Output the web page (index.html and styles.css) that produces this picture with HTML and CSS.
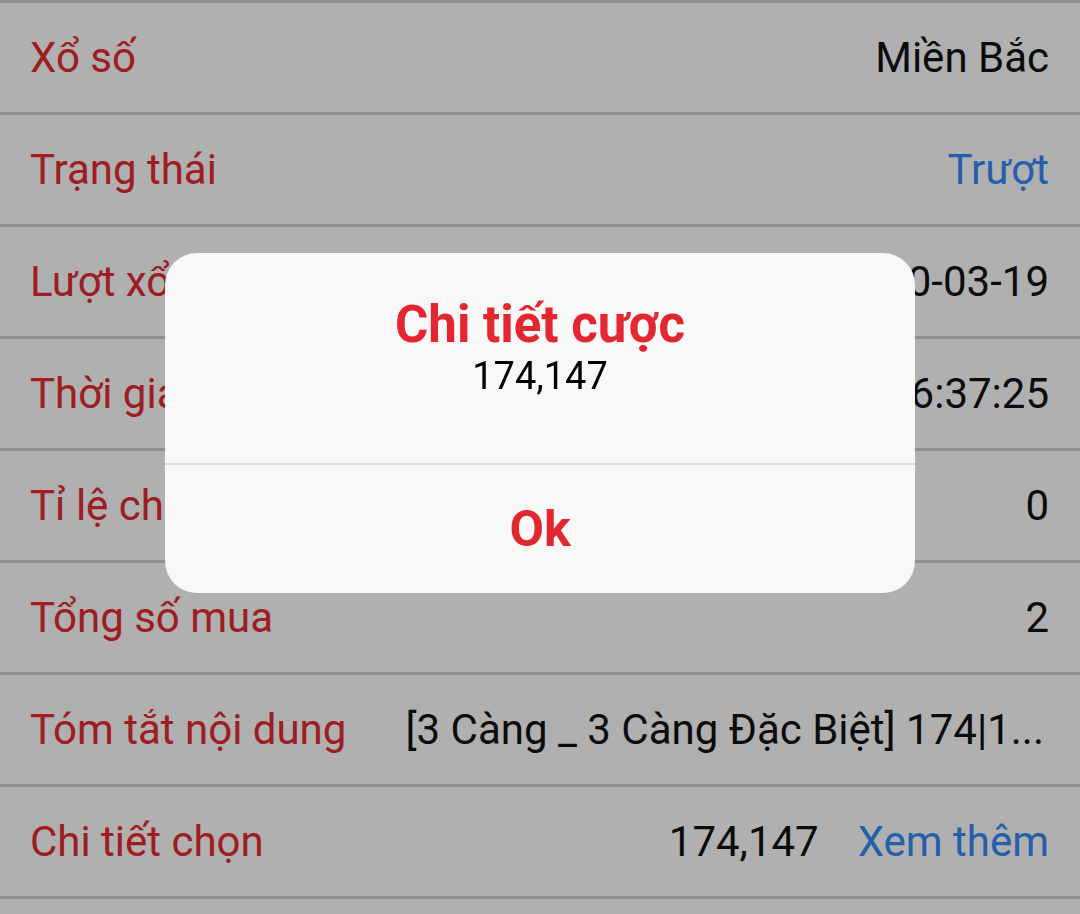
FILE: index.html
```html
<!DOCTYPE html>
<html lang="vi">

<head>
    <meta charset="UTF-8">
    <title>Chi tiết cược</title>
    <link rel="stylesheet" href="styles.css">
</head>

<body>
    <div class="detail-list">
        <div class="detail-row">
            <span class="detail-label">Xổ số</span>
            <span class="detail-value">Miền Bắc</span>
        </div>
        <div class="detail-row">
            <span class="detail-label">Trạng thái</span>
            <span class="detail-value link">Trượt</span>
        </div>
        <div class="detail-row">
            <span class="detail-label">Lượt xổ</span>
            <span class="detail-value">2020-03-19</span>
        </div>
        <div class="detail-row">
            <span class="detail-label">Thời gian</span>
            <span class="detail-value">2020-03-19 16:37:25</span>
        </div>
        <div class="detail-row">
            <span class="detail-label">Tỉ lệ chiến thắng</span>
            <span class="detail-value">0</span>
        </div>
        <div class="detail-row">
            <span class="detail-label">Tổng số mua</span>
            <span class="detail-value">2</span>
        </div>
        <div class="detail-row">
            <span class="detail-label">Tóm tắt nội dung</span>
            <span class="detail-value summary">[3 Càng _ 3 Càng Đặc Biệt] 174|1...</span>
        </div>
        <div class="detail-row">
            <span class="detail-label">Chi tiết chọn</span>
            <span class="detail-value picks">174,147</span>
            <a class="detail-value link more" href="#">Xem thêm</a>
        </div>
    </div>

    <!-- hộp thoại chi tiết cược -->
    <div class="backdrop">
        <div class="dialog">
            <div class="dialog-body">
                <div class="dialog-title">Chi tiết cược</div>
                <div class="dialog-text">174,147</div>
            </div>
            <button class="dialog-btn">Ok</button>
        </div>
    </div>
</body>

</html>
```

FILE: styles.css
```css
body {
    margin: 0;
    font-family: Roboto, 'Noto Sans', sans-serif;
    background: #ffffff;
}

.detail-list {
    border-top: 3px solid #cfcfcf;
}

.detail-row {
    height: 109px;
    display: flex;
    align-items: center;
    justify-content: space-between;
    padding: 0 31px 0 30px;
    border-bottom: 3px solid #cfcfcf;
    font-size: 42px;
}

.detail-label {
    color: #e52a31;
    white-space: nowrap;
}

.detail-value {
    color: #111111;
    white-space: nowrap;
}

.link {
    color: #358bf7;
    text-decoration: none;
}

.summary {
    flex: 1;
    min-width: 0;
    margin-left: 48px;
    margin-right: 5px;
    overflow: hidden;
    text-overflow: ellipsis;
    text-align: right;
}

.picks {
    margin-left: auto;
}

.more {
    margin-left: 39px;
}

/* lớp phủ + hộp thoại */
.backdrop {
    position: fixed;
    inset: 0;
    background: rgba(0, 0, 0, 0.31);
    display: flex;
    justify-content: center;
    align-items: flex-start;
    padding-top: 253px;
}

.dialog {
    width: 750px;
    background: #f8f8f8;
    border-radius: 32px;
    overflow: hidden;
}

.dialog-body {
    height: 212px;
    box-sizing: border-box;
    padding: 42px 20px 0;
    text-align: center;
    border-bottom: 2px solid #dcdcdc;
}

.dialog-title {
    color: #e3262f;
    font-size: 51px;
    font-weight: 700;
}

.dialog-text {
    color: #000000;
    font-size: 38px;
}

.dialog-btn {
    display: flex;
    align-items: center;
    justify-content: center;
    width: 100%;
    height: 128px;
    border: none;
    background: none;
    padding: 0;
    font-family: Roboto, 'Noto Sans', sans-serif;
    font-size: 50px;
    font-weight: 700;
    color: #e3262f;
}
```
